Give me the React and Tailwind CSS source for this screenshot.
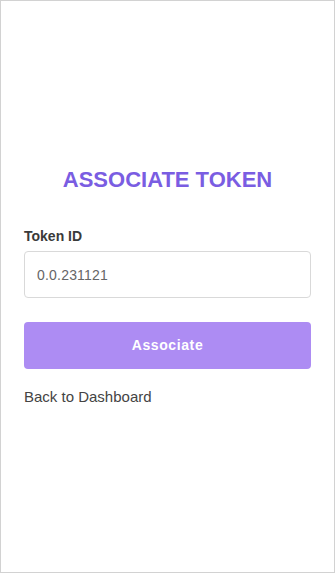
export default function App() {
  return (
    <main
      className="h-[573px] w-full border border-[#d2d2d2] bg-white px-[23px] pt-[165px]"
      style={{ fontFamily: '"Liberation Sans", Arial, sans-serif' }}
    >
      <h1 className="text-center text-[22px] font-bold leading-[28px] text-[#7a5de2]">
        ASSOCIATE TOKEN
      </h1>

      <label className="mt-8 block text-[14px] font-semibold leading-5 text-[#3a3a3a]">
        Token ID
      </label>
      <input
        type="text"
        defaultValue="0.0.231121"
        className="mt-[5px] block h-[47px] w-full rounded-[4px] border border-[#d9d9d9] px-3 text-[14px] tracking-[0.2px] text-[#666] outline-none"
      />

      <button
        type="button"
        className="mt-6 h-[47px] w-full rounded-[4px] bg-[#ad8cf3] text-[14px] font-bold tracking-[0.6px] text-white"
      >
        Associate
      </button>

      <p className="mt-4 text-[15px] leading-6 text-[#444]">
        Back to Dashboard
      </p>
    </main>
  );
}
